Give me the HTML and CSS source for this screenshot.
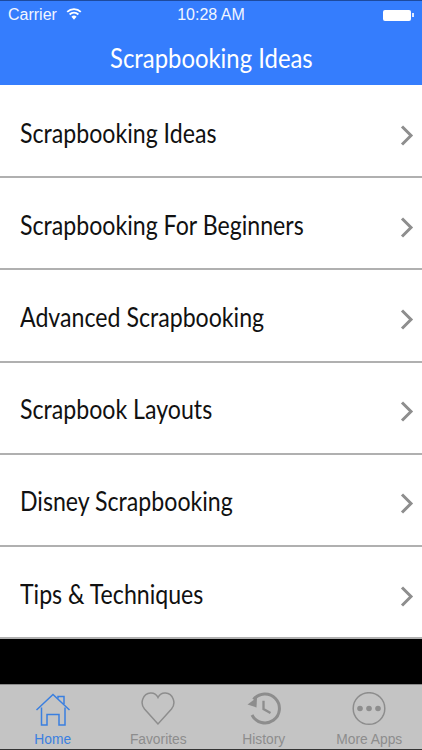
FILE: index.html
```html
<!DOCTYPE html>
<html lang="en">
<head>
<meta charset="utf-8">
<title>Scrapbooking Ideas</title>
<link rel="stylesheet" href="styles.css">
</head>
<body>
<div class="app">
  <header class="header">
    <div class="status">
      <div class="status-left">
        <span>Carrier</span>
        <svg class="wifi" width="16" height="12" viewBox="0 0 16 12"><path d="M8 11.800 5.400 8.800a3.600 3.600 0 0 1 5.200 0Z" fill="#fff"/><path d="M3.600 6.500a6.200 6.200 0 0 1 8.800 0M1.200 3.900a9.700 9.700 0 0 1 13.600 0" fill="none" stroke="#fff" stroke-width="1.800"/></svg>
      </div>
      <div class="status-time">10:28 AM</div>
      <div class="status-right">
        <span class="battery"></span><span class="battery-tip"></span>
      </div>
    </div>
    <h1 class="title"><span class="title-text">Scrapbooking Ideas</span></h1>
  </header>
  <ul class="list">
    <li class="row"><span class="row-text">Scrapbooking Ideas</span><svg class="chev" width="14" height="22" viewBox="0 0 14 22"><path d="M2 2l9 9-9 9" fill="none" stroke="#8e8e8e" stroke-width="3"/></svg></li>
    <li class="row"><span class="row-text">Scrapbooking For Beginners</span><svg class="chev" width="14" height="22" viewBox="0 0 14 22"><path d="M2 2l9 9-9 9" fill="none" stroke="#8e8e8e" stroke-width="3"/></svg></li>
    <li class="row"><span class="row-text">Advanced Scrapbooking</span><svg class="chev" width="14" height="22" viewBox="0 0 14 22"><path d="M2 2l9 9-9 9" fill="none" stroke="#8e8e8e" stroke-width="3"/></svg></li>
    <li class="row"><span class="row-text">Scrapbook Layouts</span><svg class="chev" width="14" height="22" viewBox="0 0 14 22"><path d="M2 2l9 9-9 9" fill="none" stroke="#8e8e8e" stroke-width="3"/></svg></li>
    <li class="row"><span class="row-text">Disney Scrapbooking</span><svg class="chev" width="14" height="22" viewBox="0 0 14 22"><path d="M2 2l9 9-9 9" fill="none" stroke="#8e8e8e" stroke-width="3"/></svg></li>
    <li class="row"><span class="row-text">Tips &amp; Techniques</span><svg class="chev" width="14" height="22" viewBox="0 0 14 22"><path d="M2 2l9 9-9 9" fill="none" stroke="#8e8e8e" stroke-width="3"/></svg></li>
  </ul>
  <div class="ad"></div>
  <nav class="tabs">
    <div class="tab active">
      <svg width="36" height="36" viewBox="0 0 36 36" fill="none" stroke="#3a7fe0" stroke-width="1.500"><path d="M1.500 18 18 2.500 34.500 18"/><path d="M6.500 15.500V33H12V22.500h12V33h6V15.500"/><path d="M23 6.500 V4.500h6V12"/></svg>
      <span>Home</span>
    </div>
    <div class="tab">
      <svg width="36" height="36" viewBox="0 0 36 36" fill="none" stroke="#8d8d8d" stroke-width="1.500"><path d="M18 32 4.500 17C-.5 11 3 1.500 10.500 1 14 .8 16.500 2.500 18 5.500c1.500-3 4-4.700 7.500-4.500C33 1.500 36.500 11 31.500 17Z"/></svg>
      <span>Favorites</span>
    </div>
    <div class="tab">
      <svg width="36" height="36" viewBox="0 0 36 36" fill="none" stroke="#8d8d8d" stroke-width="3"><path d="M7.500 7.500A14.500 14.500 0 1 1 6 23"/><path d="M1.500 12.500 10.500 15.500 11 5.500Z" fill="#8d8d8d" stroke="none"/><path d="M17.500 8.700V17l7 4" stroke-width="2.300"/></svg>
      <span>History</span>
    </div>
    <div class="tab">
      <svg width="36" height="36" viewBox="0 0 36 36"><circle cx="18" cy="16.500" r="15.800" fill="none" stroke="#8d8d8d" stroke-width="1.500"/><circle cx="9" cy="16.500" r="2.800" fill="#8d8d8d"/><circle cx="18" cy="16.500" r="2.800" fill="#8d8d8d"/><circle cx="27" cy="16.500" r="2.800" fill="#8d8d8d"/></svg>
      <span>More Apps</span>
    </div>
  </nav>
</div>
</body>
</html>
```
FILE: styles.css
```css
* { box-sizing: border-box; }
html, body { margin: 0; padding: 0; }
body { background: #000; font-family: "Lato", sans-serif; }
.app { width: 422px; height: 750px; display: flex; flex-direction: column; overflow: hidden; }
.header { height: 85px; background: #357dfd; color: #fff; border-top: 1px solid #1d4a9e; flex: none; }
.status { display: grid; grid-template-columns: 1fr auto 1fr; align-items: center; height: 28px; padding: 0 8px 0 8px; font-family: "Liberation Sans", sans-serif; font-size: 16px; color: #f2f6ff; }
.status-left { display: flex; align-items: center; gap: 9px; }
.wifi { margin-top: -3px; }
.status-right { display: flex; align-items: center; justify-content: flex-end; }
.battery { width: 28px; height: 11px; background: #fff; border-radius: 2px; }
.battery-tip { width: 2px; height: 4px; background: #dfe9ff; margin-left: 1px; }
.title { margin: 0; text-align: center; font-size: 26px; line-height: 58px; font-weight: 400; height: 55px; }
.title-text { display: inline-block; transform: scaleX(0.918); }
.list { list-style: none; margin: 0; padding: 1px 0 0; background: #fff; flex: none; }
.row { height: 92.200px; display: flex; align-items: center; justify-content: space-between; padding: 3px 8px 0 20px; border-bottom: 2px solid #b0b0b0; }
.row-text { font-size: 26px; color: #111; display: inline-block; transform: scaleX(0.89); transform-origin: left center; }
.chev { transform: translateY(2.500px); }
.ad { flex: 1; background: #000; }
.tabs { height: 66px; flex: none; background: #c4c4c4; border-top: 1px solid #8a8a8a; border-bottom: 1px solid #333; display: grid; grid-template-columns: repeat(4, 1fr); }
.tab { display: flex; flex-direction: column; align-items: center; padding-top: 7px; color: #8d8d8d; font-family: "Liberation Sans", sans-serif; font-size: 13.800px; line-height: 15px; gap: 4px; }
.tab.active { color: #3a7fe0; }
.tab svg { display: block; flex: none; }
```
